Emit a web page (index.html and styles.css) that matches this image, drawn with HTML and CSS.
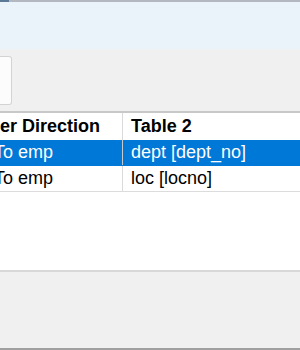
FILE: index.html
```html
<!DOCTYPE html>
<html>
<head>
<meta charset="utf-8">
<link rel="stylesheet" href="styles.css">
</head>
<body>
<div class="topstrip"><span class="topstrip-accent"></span></div>
<div class="banner"></div>
<div class="toolbar">
  <div class="toolbtn"></div>
</div>
<div class="list">
  <table class="grid">
    <thead>
      <tr>
        <th class="c1">er Direction</th>
        <th class="c2">Table 2</th>
      </tr>
    </thead>
    <tbody>
      <tr class="selected">
        <td class="c1"><span class="cut">To emp</span></td>
        <td class="c2">dept [dept_no]</td>
      </tr>
      <tr>
        <td class="c1"><span class="cut">To emp</span></td>
        <td class="c2">loc [locno]</td>
      </tr>
    </tbody>
  </table>
</div>
<div class="footer"></div>
</body>
</html>
```
FILE: styles.css
```css
html, body {
  margin: 0;
  padding: 0;
  width: 300px;
  height: 350px;
  overflow: hidden;
  background: #f0f0f0;
  font-family: "Liberation Sans", Arial, sans-serif;
  font-size: 18px;
  color: #000;
}
.topstrip {
  height: 2px;
  background: #b3b7bf;
  display: flex;
}
.topstrip-accent {
  width: 9px;
  background: #5b7897;
}
.banner {
  height: 47px;
  background: #ebf3fa;
}
.toolbar {
  height: 62px;
  box-sizing: border-box;
  padding-top: 7px;
  background: #f0f0f0;
}
.toolbtn {
  width: 11px;
  height: 47px;
  background: #fcfcfc;
  border: 1px solid #d3d3d3;
  border-left: none;
  border-radius: 0 3px 3px 0;
}
.list {
  height: 161px;
  box-sizing: border-box;
  background: #fff;
  border-top: 2px solid #c8c8c8;
  border-bottom: 2px solid #d8d8d8;
  overflow: hidden;
}
.grid {
  border-collapse: collapse;
  width: 100%;
  table-layout: fixed;
}
.grid th, .grid td {
  padding: 0;
  text-align: left;
  vertical-align: middle;
  white-space: nowrap;
  overflow: hidden;
}
.grid th {
  height: 27px;
  font-weight: bold;
}
.grid td {
  height: 25px;
  border-bottom: 1px solid #dcdcdc;
}
.grid .c1 {
  width: 122px;
  border-right: 1px solid #dadada;
}
.grid .c2 {
  padding-left: 8px;
}
.cut {
  display: inline-block;
  margin-left: -6px;
}
.selected td {
  background: #0078d7;
  color: #fff;
  border-bottom-color: #0078d7;
}
.selected td.c1 {
  border-right-color: #c8c8c8;
}
.footer {
  height: 78px;
  box-sizing: border-box;
  background: #f0f0f0;
  border-bottom: 2px solid #a0a0a0;
}
```
